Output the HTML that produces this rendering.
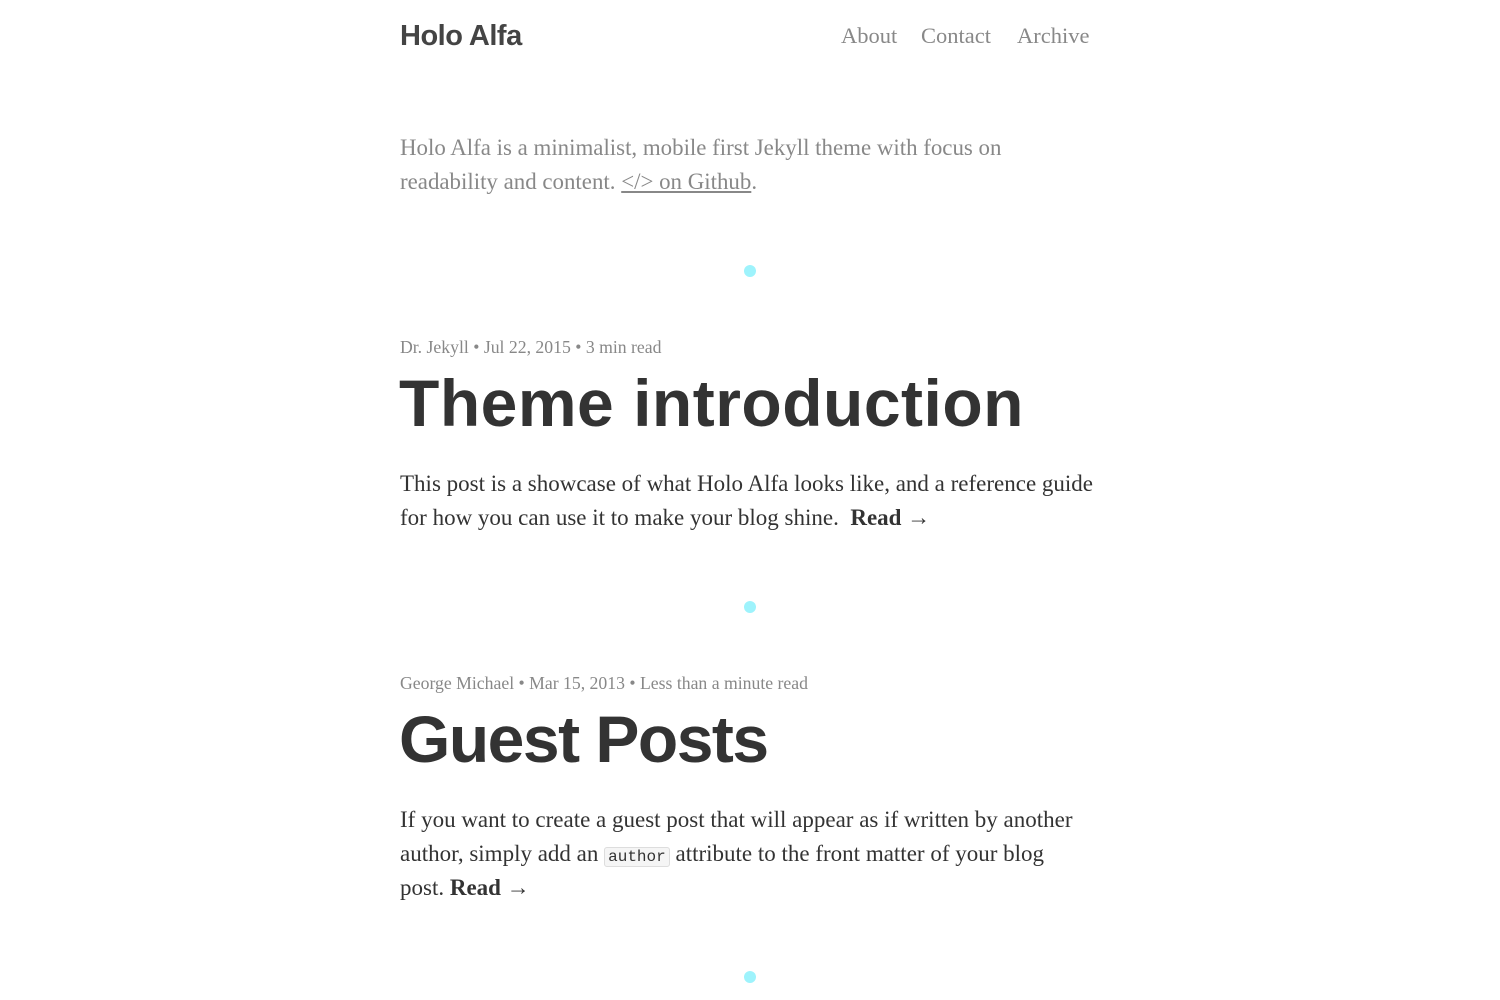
<!DOCTYPE html>
<html><head><meta charset="utf-8"><style>
body{margin:0;background:#fff;width:1500px;height:1000px;overflow:hidden;position:relative;font-family:"Liberation Serif",serif;color:#333}
.a{position:absolute;white-space:nowrap}
.logo{left:400px;top:20px;font:bold 29px "Liberation Sans",sans-serif;color:#444;letter-spacing:-0.5px}
.nav{top:23px;font-size:22.5px;color:#888}
.intro{left:400px;font-size:22.9px;color:#888;line-height:34px}
.intro a{color:#888}
.dot{width:12px;height:12px;border-radius:50%;background:#9ef3fc;left:744px}
.meta{left:400px;font-size:17.7px;color:#888}
.h{left:399px;font:bold 66px "Liberation Sans",sans-serif;color:#333;letter-spacing:-0.5px}
.p{left:400px;font-size:23px;line-height:34px;color:#333}
.p b{color:#333}
code{font:16px "Liberation Mono",monospace;background:#f5f5f5;border:1px solid #ddd;border-radius:3px;padding:0 3px}
</style></head><body>
<div class="a logo">Holo Alfa</div>
<div class="a nav" style="left:841px">About</div>
<div class="a nav" style="left:921px">Contact</div>
<div class="a nav" style="left:1017px">Archive</div>
<div class="a intro" style="top:131px">Holo Alfa is a minimalist, mobile first Jekyll theme with focus on<br>readability and content. <a href="#">&lt;/&gt; on Github</a>.</div>
<div class="a dot" style="top:265px"></div>
<div class="a meta" style="top:337px">Dr. Jekyll • Jul 22, 2015 • 3 min read</div>
<div class="a h" style="top:365px;letter-spacing:0.5px">Theme introduction</div>
<div class="a p" style="top:467px">This post is a showcase of what Holo Alfa looks like, and a reference guide<br>for how you can use it to make your blog shine.&nbsp; <b>Read →</b></div>
<div class="a dot" style="top:601px"></div>
<div class="a meta" style="top:673px">George Michael • Mar 15, 2013 • Less than a minute read</div>
<div class="a h" style="top:701px;letter-spacing:-1.5px">Guest Posts</div>
<div class="a p" style="top:803px">If you want to create a guest post that will appear as if written by another<br>author, simply add an <code>author</code> attribute to the front matter of your blog<br>post. <b>Read →</b></div>
<div class="a dot" style="top:971px"></div>
</body></html>
